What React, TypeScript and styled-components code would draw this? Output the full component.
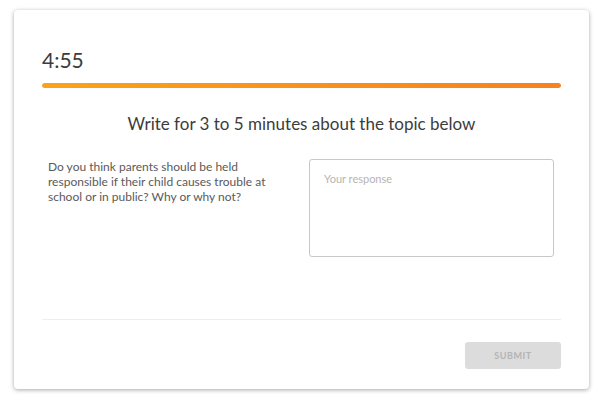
import React, { useState } from "react";
import styled, { createGlobalStyle } from "styled-components";

const GlobalStyle = createGlobalStyle`
  body {
    margin: 0;
    background: #ffffff;
    font-family: Lato, "Open Sans", sans-serif;
  }
`;

function App() {
  const [response, setResponse] = useState("");
  const progress = 100;
  return (
    <>
      <GlobalStyle />
      <Page>
        <Card>
          <Timer>4:55</Timer>
          <ProgressTrack>
            <ProgressFill style={{ width: `${progress}%` }} />
          </ProgressTrack>
          <Title>Write for 3 to 5 minutes about the topic below</Title>
          <ContentRow>
            <Prompt>
              Do you think parents should be held responsible if their child
              causes trouble at school or in public? Why or why not?
            </Prompt>
            <Response
              placeholder="Your response"
              value={response}
              onChange={e => setResponse(e.target.value)}
            />
          </ContentRow>
          <Divider />
          <Footer>
            <SubmitButton disabled={response.trim() === ""}>Submit</SubmitButton>
          </Footer>
        </Card>
      </Page>
    </>
  );
}

export default App;

const Page = styled.div`
  padding: 10px 12px 13px 14px;
`;

const Card = styled.div`
  box-sizing: border-box;
  width: 575px;
  height: 379px;
  padding: 0 28px;
  background: #fff;
  border-radius: 4px;
  box-shadow: 0 1px 4px rgba(0, 0, 0, 0.35);
  display: flex;
  flex-direction: column;
`;

const Timer = styled.div`
  margin-top: 36px;
  height: 28px;
  font-size: 21px;
  line-height: 28px;
  color: #3c3c3c;
`;

const ProgressTrack = styled.div`
  margin-top: 9px;
  height: 5px;
  border-radius: 3px;
  background: #e5e5e5;
  overflow: hidden;
`;

const ProgressFill = styled.div`
  height: 100%;
  border-radius: 3px;
  background: linear-gradient(90deg, #fba21a, #f7821e);
`;

const Title = styled.h2`
  margin: 25px 0 0;
  font-size: 17px;
  font-weight: 400;
  line-height: 22px;
  text-align: center;
  color: #3c3c3c;
`;

const ContentRow = styled.div`
  margin-top: 24px;
  padding: 0 7px 0 6px;
  display: flex;
  justify-content: space-between;
  align-items: flex-start;
`;

const Prompt = styled.p`
  margin: 0;
  width: 240px;
  font-size: 12px;
  line-height: 15px;
  color: #5a5a5a;
`;

const Response = styled.textarea`
  box-sizing: border-box;
  width: 245px;
  height: 98px;
  padding: 12px 14px;
  border: 1px solid #c8c8c8;
  border-radius: 3px;
  resize: none;
  font-family: Lato, "Open Sans", sans-serif;
  font-size: 11px;
  color: #3c3c3c;
  outline: none;

  &::placeholder {
    color: #b5b5b5;
  }
`;

const Divider = styled.hr`
  margin: 62px 0 0;
  border: none;
  border-top: 1px solid #eeeeee;
`;

const Footer = styled.div`
  margin-top: 22px;
  display: flex;
  justify-content: flex-end;
`;

const SubmitButton = styled.button`
  width: 96px;
  height: 27px;
  border: none;
  border-radius: 3px;
  background: #dcdcdc;
  color: #b4b4b4;
  font-family: Lato, "Open Sans", sans-serif;
  font-size: 9px;
  font-weight: 700;
  letter-spacing: 0.6px;
  text-transform: uppercase;
`;
